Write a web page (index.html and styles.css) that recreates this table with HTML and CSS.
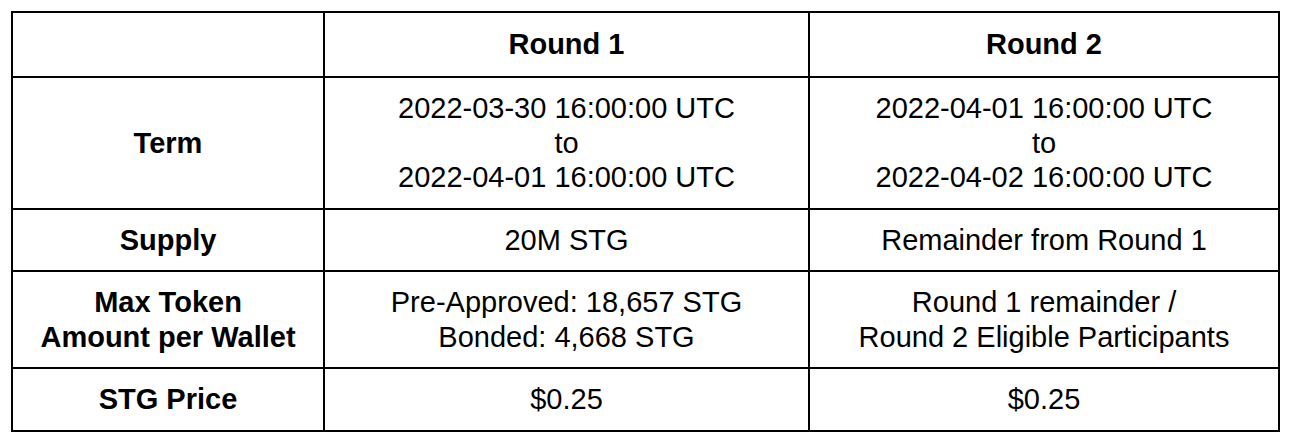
FILE: index.html
```html
<!DOCTYPE html>
<html>
<head>
<meta charset="utf-8">
<link rel="stylesheet" href="styles.css">
</head>
<body>
<table class="sale">
  <colgroup>
    <col class="c1">
    <col class="c2">
    <col class="c3">
  </colgroup>
  <tr class="head">
    <td></td>
    <td class="b">Round 1</td>
    <td class="b">Round 2</td>
  </tr>
  <tr>
    <td class="b">Term</td>
    <td>2022-03-30 16:00:00 UTC<br>to<br>2022-04-01 16:00:00 UTC</td>
    <td>2022-04-01 16:00:00 UTC<br>to<br>2022-04-02 16:00:00 UTC</td>
  </tr>
  <tr>
    <td class="b">Supply</td>
    <td>20M STG</td>
    <td>Remainder from Round 1</td>
  </tr>
  <tr>
    <td class="b">Max Token<br>Amount per Wallet</td>
    <td>Pre-Approved: 18,657 STG<br>Bonded: 4,668 STG</td>
    <td>Round 1 remainder /<br>Round 2 Eligible Participants</td>
  </tr>
  <tr class="last">
    <td class="b">STG Price</td>
    <td>$0.25</td>
    <td>$0.25</td>
  </tr>
</table>
</body>
</html>
```

FILE: styles.css
```css
html, body {
  margin: 0;
  padding: 0;
  background: #fff;
}
body {
  padding: 11px;
  font-family: "Liberation Sans", Arial, sans-serif;
  font-size: 29px;
  color: #000;
}
.sale {
  border-collapse: separate;
  border-spacing: 0;
  table-layout: fixed;
  width: 1267px;
  border-right: 2px solid #000;
  border-bottom: 2px solid #000;
}
.c1 { width: 312px; }
.c2 { width: 485px; }
.c3 { width: 470px; }
.sale td {
  border-top: 2px solid #000;
  border-left: 2px solid #000;
  padding: 13px 4px;
  line-height: 34.5px;
  text-align: center;
  vertical-align: middle;
}
.sale .head td {
  padding-top: 14px;
  padding-bottom: 14.5px;
}
.sale .b {
  font-weight: bold;
}
```
